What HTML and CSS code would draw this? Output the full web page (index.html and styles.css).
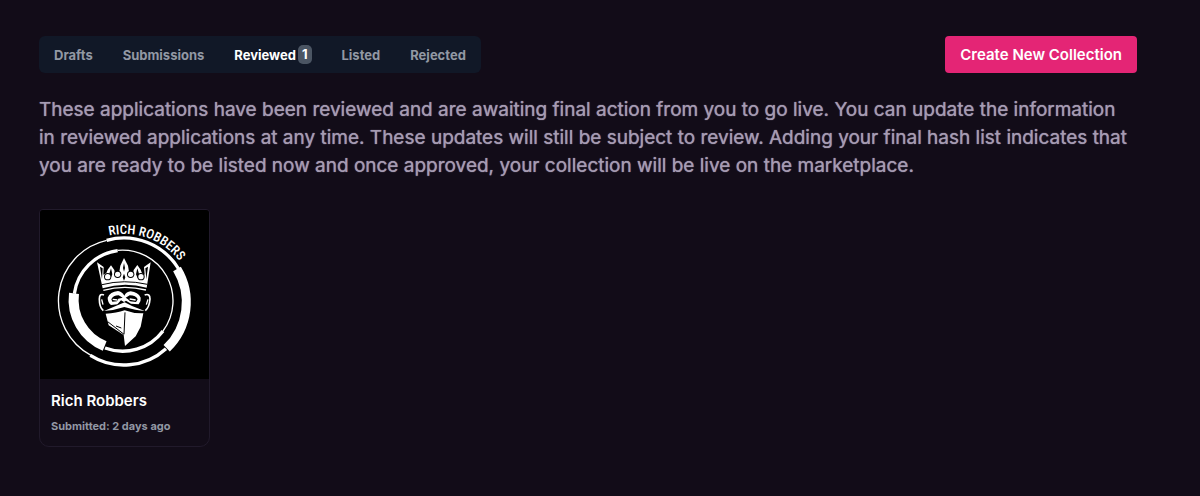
FILE: index.html
```html
<!DOCTYPE html>
<html lang="en">
<head>
  <meta charset="UTF-8">
  <meta name="viewport" content="width=device-width, initial-scale=1.0">
  <title>My Collections</title>
  <link rel="stylesheet" href="styles.css">
</head>
<body>
  <main class="page">
    <div class="toolbar">
      <nav class="tabs">
        <a href="#drafts" class="tab">Drafts</a>
        <a href="#submissions" class="tab">Submissions</a>
        <a href="#reviewed" class="tab active">Reviewed<span class="badge">1</span></a>
        <a href="#listed" class="tab">Listed</a>
        <a href="#rejected" class="tab">Rejected</a>
      </nav>
      <button type="button" class="create-button">Create New Collection</button>
    </div>

    <p class="description">These applications have been reviewed and are awaiting final action from you to go live. You can update the information in reviewed applications at any time. These updates will still be subject to review. Adding your final hash list indicates that you are ready to be listed now and once approved, your collection will be live on the marketplace.</p>

    <div class="collections">
      <article class="card">
        <svg class="card-image" viewBox="12 13 507 507" role="img" aria-label="Rich Robbers logo">
          <defs>
            <path id="nameArc" d="M220 90 A206 206 0 0 1 472 291"/>
          </defs>
          <rect x="12" y="13" width="507" height="507" fill="#000"/>
          <text class="logo-text"><textPath href="#nameArc">RICH ROBBERS</textPath></text>

          <!-- outer ring -->
          <g fill="none" stroke="#fff">
            <path stroke-width="4" d="M165 449 A186 186 0 0 1 212 104"/>
            <path stroke-width="10" d="M212 104 A192 192 0 0 1 428 190"/>
            <path stroke-width="27" d="M423 190 A192 192 0 0 1 392 428"/>
            <path stroke-width="10" d="M390 429 A188 188 0 0 1 163 449"/>
          </g>

          <!-- inner ring -->
          <g fill="none" stroke="#fff">
            <path stroke-width="4" d="M245 134 A152 152 0 0 1 381 376"/>
            <path stroke-width="10" d="M381 376 A151 151 0 0 1 207 427"/>
            <path stroke-width="30" d="M206 421 A150 150 0 0 1 114 263"/>
            <path stroke-width="10" d="M115 264 A151 151 0 0 1 245 135"/>
          </g>

          <!-- crown -->
          <path fill="#fff" d="M183 170 L203 184 L202 207 L211 202 L215 192 L225 179 L235 193 L237 207 L250 198 L253 180 L264 157 L276 180 L279 198 L291 207 L293 193 L304 178 L314 192 L318 203 L326 207 L324 184 L344 170 L332 246 Q264 228 200 248 Z"/>
          <g fill="#000">
            <circle cx="215" cy="213" r="11"/>
            <circle cx="245" cy="206" r="11"/>
            <circle cx="284" cy="206" r="11"/>
            <circle cx="315" cy="213" r="11"/>
            <path d="M192 183 L200 188 L198 221 Z M336 183 L328 188 L331 221 Z"/>
            <path d="M225 188 L229 206 L224 218 L220 204 Z M304 188 L309 204 L305 218 L300 206 Z"/>
            <path d="M264 172 L267 187 L264 198 L261 187 Z M264 204 L268 215 L264 225 L260 215 Z"/>
          </g>
          <g fill="#fff">
            <circle cx="215" cy="213" r="8"/>
            <circle cx="245" cy="206" r="8"/>
            <circle cx="284" cy="206" r="8"/>
            <circle cx="315" cy="213" r="8"/>
          </g>
          <path fill="none" stroke="#000" stroke-width="3" d="M198 237 Q264 220 334 236"/>

          <!-- head, ears and eyes -->
          <g fill="none" stroke="#fff" stroke-width="4">
            <path d="M202 254 Q264 237 330 253"/>
            <path stroke-width="5" d="M204 268 Q190 262 190 280 Q190 305 202 315 M326 268 Q342 262 342 280 Q340 305 328 315"/>
            <path d="M197 281 L201 297 M336 281 L331 297"/>
          </g>
          <path fill="#fff" d="M215 276 Q222 258 246 256 Q258 258 265 270 Q271 258 284 257 Q306 259 314 276 Q316 287 308 296 L285 294 L270 285 L264 289 L255 284 L244 296 L225 298 Q215 290 215 276 Z"/>
          <path fill="#000" d="M226 281 Q231 269 248 269 L260 276 L247 279 L243 287 L229 288 Z M269 276 L281 269 Q300 269 305 281 L300 289 L282 287 L276 281 Z"/>
          <path fill="none" stroke="#fff" stroke-width="4" d="M230 281 L244 283 M281 280 L299 283"/>

          <!-- bandana -->
          <path fill="#fff" d="M204 316 L241 300 L266 290 L288 301 L326 316 Q301 315 265 304 Q235 314 204 316 Z"/>
          <path fill="#fff" d="M209 324 Q242 323 266 314 Q292 324 322 323 L314 363 L299 392 L267 421 L263 388 L218 359 Z"/>
          <path fill="none" stroke="#000" stroke-width="3" d="M267 320 L264 386 L215 348 M240 361 L256 367"/>
        </svg>
        <div class="card-body">
          <h2>Rich Robbers</h2>
          <p>Submitted: 2 days ago</p>
        </div>
      </article>
    </div>
  </main>
</body>
</html>
```
FILE: styles.css
```css
* {
  box-sizing: border-box;
}

body {
  margin: 0;
  background-color: #120c18;
  color: #fff;
  font-family: 'Inter', 'Liberation Sans', sans-serif;
}

.page {
  padding: 36px 63px 48px 39px;
}

.toolbar {
  display: flex;
  justify-content: space-between;
  align-items: center;
}

.tabs {
  display: flex;
  height: 37px;
  background-color: #111827;
  border-radius: 6px;
}

.tab {
  display: flex;
  align-items: center;
  padding: 0 15px;
  color: #9298a4;
  font-size: 13px;
  font-weight: 700;
  text-decoration: none;
}

.tab.active {
  color: #fff;
}

.badge {
  margin-left: 2px;
  padding: 0 4px;
  background-color: #4b5563;
  border-radius: 5px;
  line-height: 19px;
}

.create-button {
  height: 37px;
  padding: 0 15px;
  background-color: #e42575;
  border: none;
  border-radius: 4px;
  color: #fff;
  font-family: inherit;
  font-size: 15px;
  font-weight: 600;
  cursor: pointer;
}

.description {
  margin: 23px 0 29px;
  padding-right: 2px;
  color: #a59bb2;
  font-size: 19px;
  font-weight: 400;
  line-height: 28px;
  text-shadow: 0 0 1px #a59bb2;
}

.collections {
  display: flex;
  flex-wrap: wrap;
  gap: 20px;
}

.card {
  width: 171px;
  border: 1px solid #211a2b;
  border-radius: 4px 4px 10px 10px;
  overflow: hidden;
}

.card-image {
  display: block;
  width: 100%;
}

.logo-text {
  fill: #fff;
  font-family: 'Roboto Condensed', 'Open Sans Condensed', 'Roboto', sans-serif;
  font-size: 39px;
  font-weight: 500;
}

.card-body {
  padding: 12px 11px 11px;
}

.card h2 {
  margin: 0 0 6px;
  font-size: 15px;
  font-weight: 600;
  line-height: 20px;
}

.card p {
  margin: 0;
  color: #9298a4;
  font-size: 11px;
  font-weight: 700;
  line-height: 18px;
}
```
